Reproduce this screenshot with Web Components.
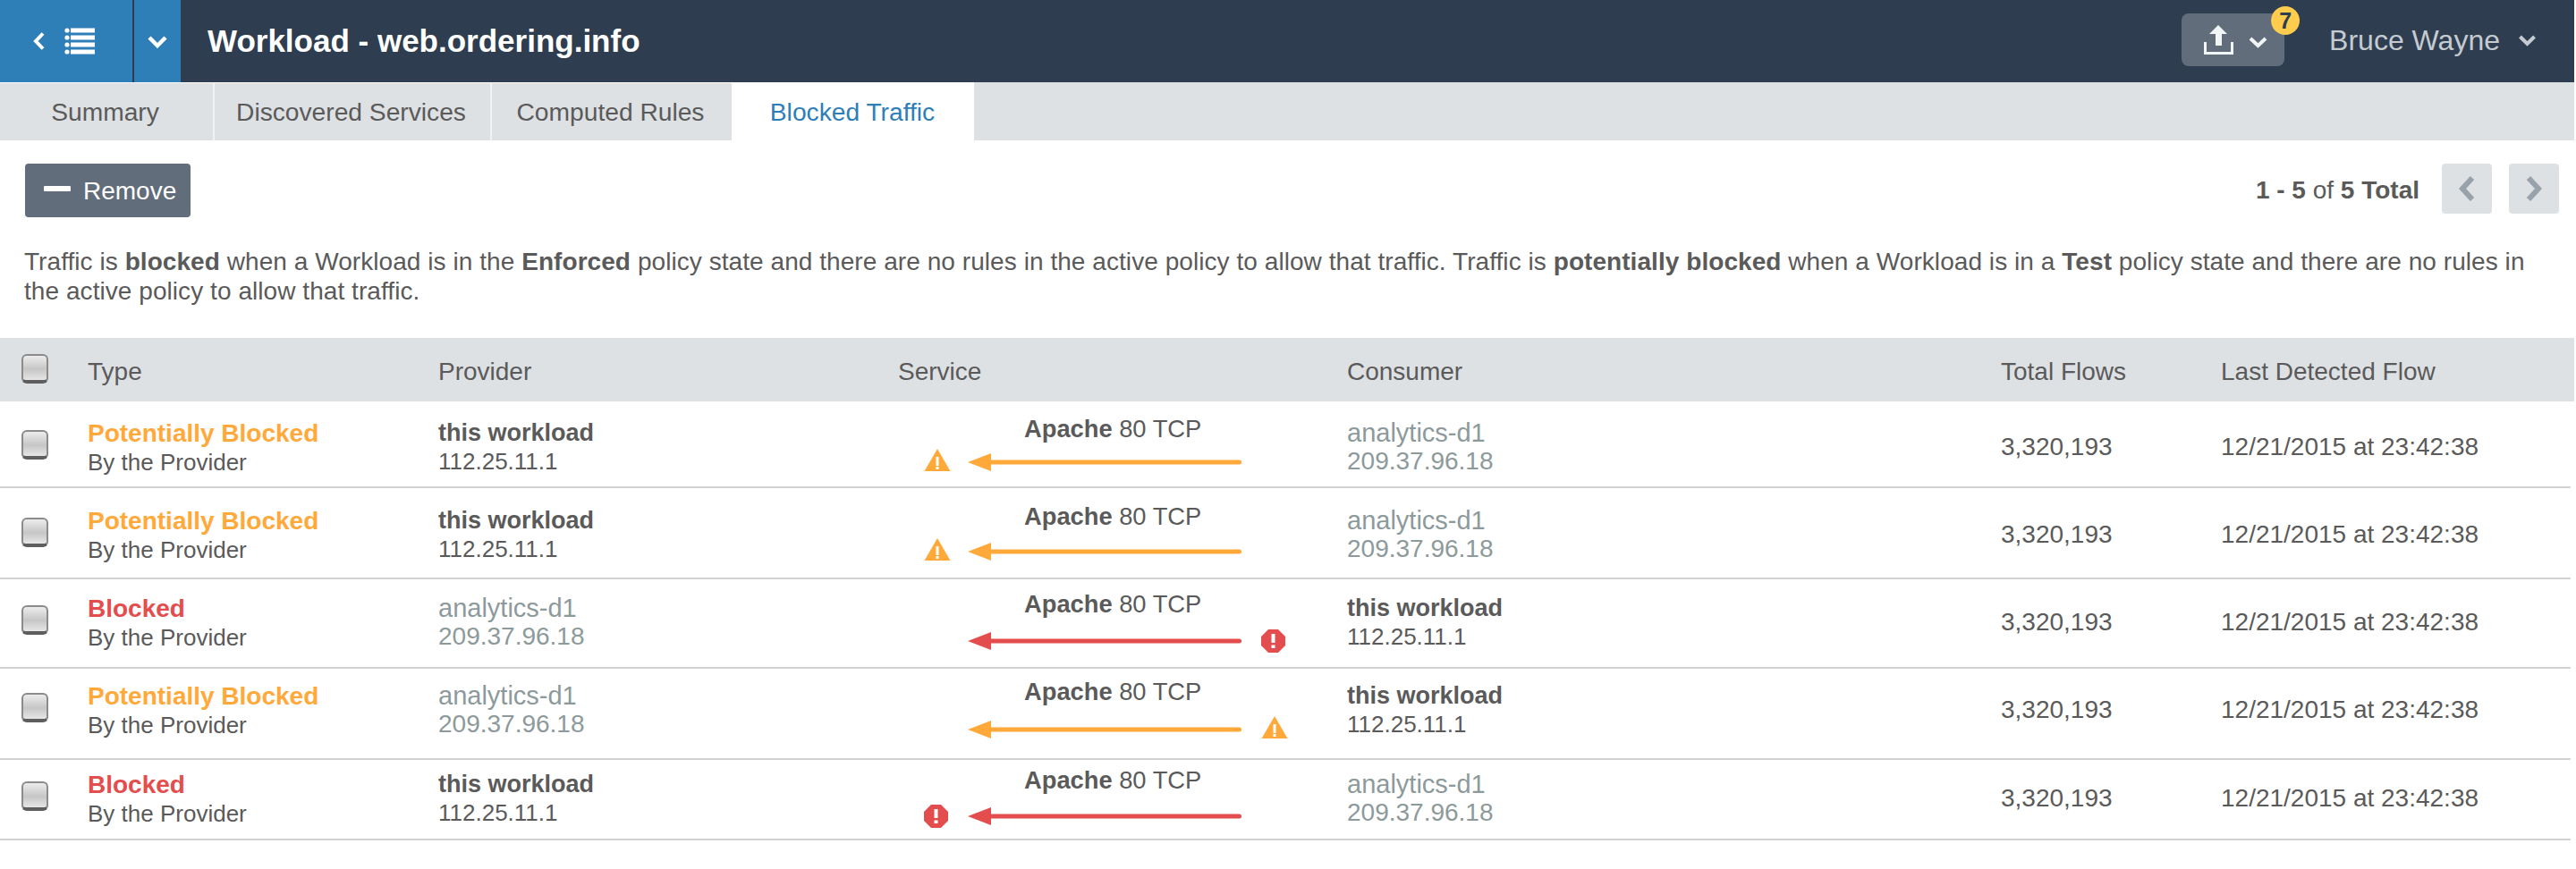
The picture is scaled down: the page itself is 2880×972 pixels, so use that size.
<!doctype html>
<html>
<head>
<meta charset="utf-8">
<title>Workload - web.ordering.info</title>
<style>
  html, body { margin: 0; background: #fff; }
  body { width: 2878px; font-family: "Liberation Sans", Arial, sans-serif; color: #5a5a5a; }
</style>
</head>
<body>
<app-header title-text="Workload - web.ordering.info" user="Bruce Wayne" count="7"></app-header>
<tab-bar>
  <tab-item width="240" sep>Summary</tab-item>
  <tab-item width="310" sep>Discovered Services</tab-item>
  <tab-item width="268">Computed Rules</tab-item>
  <tab-item width="271" active>Blocked Traffic</tab-item>
</tab-bar>
<tool-bar>
  <b>1 - 5</b> of <b>5 Total</b>
</tool-bar>
<info-text>
  Traffic is <b>blocked</b> when a Workload is in the <b>Enforced</b> policy state and there are no rules in the active policy to allow that traffic. Traffic is <b>potentially blocked</b> when a Workload is in a <b>Test</b> policy state and there are no rules in<br>the active policy to allow that traffic.
</info-text>
<flow-head></flow-head>
<flow-row h="97" pad="20" drop="37" kind="potential" from="this" icon="left"></flow-row>
<flow-row h="102" pad="21" drop="39" kind="potential" from="this" icon="left"></flow-row>
<flow-row h="100" pad="17" drop="41" kind="blocked" from="other" icon="right"></flow-row>
<flow-row h="102" pad="15" drop="42" kind="potential" from="other" icon="right"></flow-row>
<flow-row h="90" pad="12" drop="40" kind="blocked" from="this" icon="left"></flow-row>

<script>
const CHEVRON = (pts, w) => `<polyline points="${pts}" fill="none" stroke="currentColor" stroke-width="${w}"/>`

customElements.define('app-header',
  class extends HTMLElement {
    constructor() {
      super()
      const shadow = this.attachShadow({ mode: 'open' })
      shadow.innerHTML = `
        <style>
          :host { display: flex; height: 92px; background: #2e3e50; color: #fff; align-items: stretch; }
          .nav { display: flex; background: #2e7eb7; width: 202px; }
          .menu { border-right: 2px solid #2e3e50; display: flex; align-items: center; padding-left: 37px; gap: 22px; width: 111px; }
          .drop { flex: 1; display: flex; align-items: center; justify-content: center; }
          h1 { margin: 0 0 0 30px; font-size: 35px; line-height: 92px; font-weight: bold; }
          .right { margin-left: auto; display: flex; align-items: center; }
          .action { position: relative; width: 115px; height: 59px; margin: -3px 50px 0 0; background: #616d7a; border-radius: 8px; }
          .action svg { display: block; }
          .badge { position: absolute; left: 100px; top: -8px; width: 32px; height: 32px; border-radius: 50%; background: #ffcc4d; color: #2e3e50; font-size: 25px; font-weight: bold; text-align: center; line-height: 32px; }
          .user { color: #c5cbd1; font-size: 32px; display: flex; align-items: center; gap: 21px; padding-right: 43px; margin-top: -2px; }
        </style>
        <div class="nav">
          <div class="menu">
            <svg width="13" height="20" viewBox="0 0 13 20">${CHEVRON('11,1.5 3,10 11,18.5', 4)}</svg>
            <svg width="34" height="30" viewBox="0 0 34 30" fill="currentColor">
              <circle cx="3" cy="3" r="2.6"/><rect x="7" y="0.5" width="27" height="5"/>
              <circle cx="3" cy="11" r="2.6"/><rect x="7" y="8.5" width="27" height="5"/>
              <circle cx="3" cy="19" r="2.6"/><rect x="7" y="16.5" width="27" height="5"/>
              <circle cx="3" cy="27" r="2.6"/><rect x="7" y="24.5" width="27" height="5"/>
            </svg>
          </div>
          <div class="drop">
            <svg width="22" height="15" viewBox="0 0 22 15">${CHEVRON('2,3 11,12 20,3', 4.5)}</svg>
          </div>
        </div>
        <h1></h1>
        <div class="right">
          <div class="action">
            <svg width="115" height="59" viewBox="0 0 115 59">
              <path d="M41 13 L51 23 L45 23 L45 36 L38 36 L38 23 L31 23 Z" fill="#f2f5f6"/>
              <path d="M26.500 32 V44.500 H56.500 V32" fill="none" stroke="#f2f5f6" stroke-width="3"/>
              <g color="#f2f5f6">${CHEVRON('77,28 85.500,36 94,28', 4)}</g>
            </svg>
            <span class="badge"></span>
          </div>
          <div class="user">
            <span class="name"></span>
            <svg width="19" height="13" viewBox="0 0 19 13">${CHEVRON('1.500,2 9.500,10 17.500,2', 4)}</svg>
          </div>
        </div>
      `
      shadow.querySelector('h1').textContent = this.getAttribute('title-text')
      shadow.querySelector('.name').textContent = this.getAttribute('user')
      shadow.querySelector('.badge').textContent = this.getAttribute('count')
    }
  }
)

customElements.define('tab-bar',
  class extends HTMLElement {
    constructor() {
      super()
      const shadow = this.attachShadow({ mode: 'open' })
      shadow.innerHTML = `
        <style>
          :host { display: flex; height: 65px; background: #dee1e4; }
        </style>
        <slot></slot>
      `
    }
  }
)

customElements.define('tab-item',
  class extends HTMLElement {
    constructor() {
      super()
      const shadow = this.attachShadow({ mode: 'open' })
      shadow.innerHTML = `
        <style>
          :host { display: block; box-sizing: border-box; height: 65px; line-height: 64px; padding-right: 3px; text-align: center; font-size: 28.2px; color: #5a5a5a; background: #dee1e4; border-top: 1px solid #fff; }
          :host([sep]) { border-right: 2px solid #f1f2f3; }
          :host([active]) { background: #fff; color: #2e7eb7; padding-right: 1px; }
        </style>
        <slot></slot>
      `
      this.style.width = this.getAttribute('width') + 'px'
    }
  }
)

customElements.define('tool-bar',
  class extends HTMLElement {
    constructor() {
      super()
      const shadow = this.attachShadow({ mode: 'open' })
      shadow.innerHTML = `
        <style>
          :host { display: flex; align-items: center; padding: 26px 17px 0 28px; font-size: 28px; color: #5a5a5a; }
          button { display: flex; align-items: center; width: 185px; height: 60px; padding: 2px 0 0 21px; gap: 14px; border: 0; border-radius: 4px; background: #616d7a; color: #fff; font: inherit; }
          .minus { width: 30px; height: 6px; background: #fff; border-radius: 1px; margin-top: -6px; }
          .count { margin-left: auto; margin-right: 25px; }
          .page { width: 56px; height: 56px; border-radius: 4px; background: #dee1e4; color: #98a2aa; display: flex; align-items: center; justify-content: center; margin-top: -4px; }
          .page + .page { margin-left: 19px; }
        </style>
        <button><span class="minus"></span>Remove</button>
        <span class="count"><slot></slot></span>
        <span class="page"><svg width="18" height="28" viewBox="0 0 18 28">${CHEVRON('15,2 4,14 15,26', 6)}</svg></span>
        <span class="page"><svg width="18" height="28" viewBox="0 0 18 28">${CHEVRON('3,2 14,14 3,26', 6)}</svg></span>
      `
    }
  }
)

customElements.define('info-text',
  class extends HTMLElement {
    constructor() {
      super()
      const shadow = this.attachShadow({ mode: 'open' })
      shadow.innerHTML = `
        <style>
          :host { display: block; padding: 33px 0 36px 27px; font-size: 28px; line-height: 33px; letter-spacing: 0.06px; white-space: nowrap; color: #5a5a5a; }
        </style>
        <slot></slot>
      `
    }
  }
)

const COLUMNS = '98px 392px 514px 502px 731px 246px 1fr'

customElements.define('check-box',
  class extends HTMLElement {
    constructor() {
      super()
      const shadow = this.attachShadow({ mode: 'open' })
      shadow.innerHTML = `
        <style>
          :host { display: block; box-sizing: border-box; width: 30px; height: 33px; border-radius: 6px; border: 2px solid #8b8b8b; border-bottom: 4px solid #5e5e5e; background: linear-gradient(#ececec, #c6c6c6 55%, #e6e6e6); }
        </style>
      `
    }
  }
)

customElements.define('flow-head',
  class extends HTMLElement {
    constructor() {
      super()
      const shadow = this.attachShadow({ mode: 'open' })
      shadow.innerHTML = `
        <style>
          :host { display: grid; grid-template-columns: ${COLUMNS}; height: 71px; align-items: center; background: #dee1e4; font-size: 28px; color: #5a5a5a; }
          check-box { margin: -3px 0 0 24px; }
          span { margin-top: 5px; }
        </style>
        <check-box></check-box>
        <span>Type</span><span>Provider</span><span>Service</span><span>Consumer</span><span>Total Flows</span><span>Last Detected Flow</span>
      `
    }
  }
)

customElements.define('flow-party',
  class extends HTMLElement {
    constructor() {
      super()
      const shadow = this.attachShadow({ mode: 'open' })
      shadow.innerHTML = `
        <style>
          :host { display: block; line-height: 32px; margin-top: -1px; }
          .this b { display: block; font-size: 27px; color: #5a5a5a; }
          .this span { font-size: 26px; color: #5a5a5a; }
          .other { font-size: 28px; color: #8d9a9b; }
          .other b { display: block; font-weight: normal; font-size: 29px; }
        </style>
      `
      const box = document.createElement('div')
      if (this.getAttribute('who') === 'this') {
        box.className = 'this'
        box.innerHTML = '<b>this workload</b><span>112.25.11.1</span>'
      } else {
        box.className = 'other'
        box.innerHTML = '<b>analytics-d1</b><span>209.37.96.18</span>'
      }
      shadow.appendChild(box)
    }
  }
)

customElements.define('flow-arrow',
  class extends HTMLElement {
    constructor() {
      super()
      const shadow = this.attachShadow({ mode: 'open' })
      const color = this.getAttribute('kind') === 'blocked' ? '#e44d4d' : '#ffa93a'
      const mark = this.getAttribute('kind') === 'blocked'
        ? `<svg width="30" height="30" viewBox="0 0 30 30">
             <path d="M8 2 H19 L27 10 V20 L19 28 H8 L0 20 V10 Z" fill="${color}"/>
             <rect x="11.500" y="7" width="4" height="10" fill="#fff"/><rect x="11.500" y="19.500" width="4" height="3.500" fill="#fff"/>
           </svg>`
        : `<svg width="30" height="30" viewBox="0 0 30 30">
             <path d="M15 0 L29.500 25 H0.500 Z" fill="${color}"/>
             <rect x="13.500" y="9" width="3" height="10" fill="#fff"/><rect x="13.500" y="20" width="3" height="3" fill="#fff"/>
           </svg>`
      const left = this.getAttribute('icon') === 'left' ? mark : ''
      const right = this.getAttribute('icon') === 'right' ? mark : ''
      shadow.innerHTML = `
        <style>
          :host { display: flex; align-items: center; height: 30px; padding-left: 29px; }
          .slot { width: 30px; height: 30px; }
          .gap-l { width: 19px; } .gap-r { width: 21px; }
          svg { display: block; }
        </style>
        <div class="slot">${left}</div>
        <div class="gap-l"></div>
        <svg width="307" height="22" viewBox="0 0 307 22">
          <path d="M0 11 L26 1 V21 Z" fill="${color}"/>
          <path d="M24 11 H303.500" stroke="${color}" stroke-width="5" stroke-linecap="round"/>
        </svg>
        <div class="gap-r"></div>
        <div class="slot">${right}</div>
      `
    }
  }
)

customElements.define('flow-row',
  class extends HTMLElement {
    constructor() {
      super()
      const shadow = this.attachShadow({ mode: 'open' })
      const kind = this.getAttribute('kind')
      const pad = Number(this.getAttribute('pad'))
      const drop = Number(this.getAttribute('drop'))
      const isThis = this.getAttribute('from') === 'this'
      const provider = isThis ? 'this' : 'other'
      const consumer = isThis ? 'other' : 'this'
      shadow.innerHTML = `
        <style>
          :host { display: grid; grid-template-columns: ${COLUMNS}; box-sizing: border-box; height: ${this.getAttribute('h')}px; border-bottom: 2px solid #d2d2d2; padding-top: ${pad}px; margin-right: 4px; align-items: start; color: #5a5a5a; }
          check-box { margin: 12px 0 0 24px; }
          .type { line-height: 32px; font-size: 26px; }
          .type b { display: block; font-size: 28px; }
          .potential b { color: #ffa93a; }
          .blocked b { color: #e44d4d; }
          .service { margin-top: -5px; }
          .label { padding-left: 141px; line-height: 32px; font-size: 27.3px; }
          flow-arrow { margin-top: ${drop - 31}px; }
          .one { font-size: 28px; line-height: 32px; margin-top: 15px; }
        </style>
        <check-box></check-box>
        <div class="type ${kind}"><b>${kind === 'blocked' ? 'Blocked' : 'Potentially Blocked'}</b>By the Provider</div>
        <flow-party who="${provider}"></flow-party>
        <div class="service">
          <div class="label"><b>Apache</b> 80 TCP</div>
          <flow-arrow kind="${kind}" icon="${this.getAttribute('icon')}"></flow-arrow>
        </div>
        <flow-party who="${consumer}"></flow-party>
        <div class="one">3,320,193</div>
        <div class="one">12/21/2015 at 23:42:38</div>
      `
    }
  }
)
</script>
</body>
</html>
